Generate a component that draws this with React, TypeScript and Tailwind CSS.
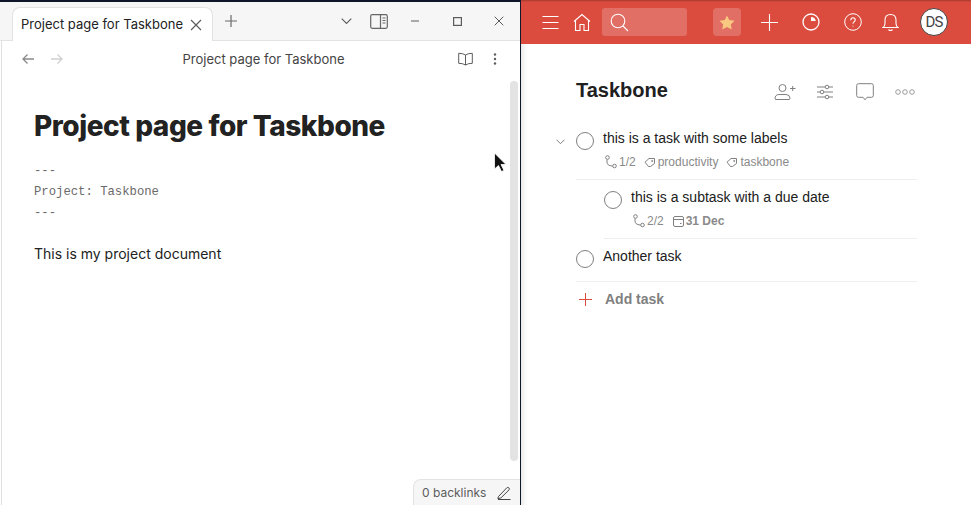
import React from "react";

const Ico = ({ w = 20, h = 20, vb, className = "", children, sw = 1 }: any) => (
  <svg width={w} height={h} viewBox={vb || `0 0 ${w} ${h}`} fill="none" stroke="currentColor" strokeWidth={sw} className={"shrink-0 " + className}>
    {children}
  </svg>
);

const SubIcon = () => (
  <Ico w={14} h={14} className="text-[#808080]">
    <circle cx="3.5" cy="2.5" r="1.8" />
    <circle cx="10.5" cy="11" r="1.8" />
    <path d="M3 4.5v2.5q0 3.8 5.5 4" />
  </Ico>
);

const TagIcon = () => (
  <Ico w={12} h={12} className="text-[#808080]">
    <path d="M1 6.2 L5 2.5 H10.5 V7.5 L6.5 10.5 H4.5 Z" />
    <circle cx="8.2" cy="5" r=".6" />
  </Ico>
);

const Circle = () => <span className="block w-[18px] h-[18px] rounded-full border border-[#808080] shrink-0" />;

function LeftPane() {
  return (
    <div className="relative w-[521px] shrink-0 h-full flex flex-col bg-white border-r border-[#0f172a] font-['Inter',sans-serif] overflow-hidden">
      <div className="h-[2px] bg-[#0f1629] shrink-0" />
      <div className="h-[39px] shrink-0 flex items-end bg-[#f6f6f6] border-b border-[#e3e3e3] text-[#5c5c5c]">
        <div className="ml-3 w-[201px] h-[34px] -mb-px bg-white border border-b-0 border-[#e3e3e3] rounded-t-lg flex items-center pl-[8px] text-[13px] text-[#222] leading-none">
          <span className="whitespace-nowrap">Project page for Taskbone</span>
          <Ico w={12} h={12} sw={1.2} className="ml-[7px] text-[#5c5c5c]"><path d="M1 1l10 10M11 1L1 11" /></Ico>
        </div>
        <div className="flex items-center h-[38px] ml-[11px] text-[#6a6a6a]">
          <Ico w={14} h={14} sw={1.2}><path d="M7 1v12M1 7h12" /></Ico>
        </div>
        <div className="flex-1" />
        <div className="flex items-center h-[38px] text-[#5c5c5c]">
          <Ico w={11} h={7} sw={1.1}><path d="M.7.7l4.800 4.800L10.300.7" /></Ico>
          <Ico w={18} h={15} sw={1.2} className="ml-[18px] text-[#666]">
            <rect x=".7" y=".7" width="16.600" height="13.600" rx="1.500" />
            <path d="M10.500 1v13M12.500 4h3M12.500 6.500h3M12.500 9h3" />
          </Ico>
          <Ico w={8} h={2} sw={1} className="ml-[23px]"><path d="M0 1h8" /></Ico>
          <Ico w={9} h={9} sw={1.200} className="ml-[34px]"><rect x=".600" y=".600" width="7.800" height="7.800" /></Ico>
          <Ico w={10} h={10} sw={1} className="ml-[32px] mr-[16px]"><path d="M.7.7l8.600 8.600M9.300.7L.7 9.300" /></Ico>
        </div>
      </div>
      <div className="flex-1 flex flex-col border-l border-[#e0e0e0] ml-px min-h-0">
        <div className="h-[36px] mb-[2px] shrink-0 flex items-center pl-[20px] pr-[20px]">
          <Ico w={12} h={12} sw={1.300} className="text-[#8a8a8a]"><path d="M12 6H1M5.500 1.500L1 6l4.500 4.500" /></Ico>
          <Ico w={12} h={12} sw={1.300} className="ml-[17px] text-[#d0d0d0]"><path d="M0 6h11M6.500 1.500L11 6l-4.500 4.500" /></Ico>
          <div className="flex-1 text-center text-[13px] leading-none text-[#444] pl-[6px] whitespace-nowrap">Project page for Taskbone</div>
          <Ico w={15} h={14} sw={1} className="text-[#5c5c5c] mr-[20px]"><path d="M7.500 3Q5 1.300.7 1.300v10Q5 11.300 7.500 13 10 11.300 14.300 11.300v-10Q10 1.300 7.500 3zM7.500 3v10" /></Ico>
          <svg width="4" height="12" viewBox="0 0 4 12" className="fill-[#5c5c5c] mr-[3px]"><circle cx="2" cy="1.500" r="1.200" /><circle cx="2" cy="6" r="1.200" /><circle cx="2" cy="10.500" r="1.200" /></svg>
        </div>
        <div className="pl-[32px] pr-10">
          <h1 className="mt-[29px] mb-[-1px] text-[28px] leading-[36px] font-extrabold tracking-[-0.45px] text-[#222] whitespace-nowrap">Project page for Taskbone</h1>
          <div className="mt-[18px] font-['Liberation_Mono',monospace] text-[12.250px] leading-[21px] text-[#6a6a6a]">
            <div>---</div>
            <div>Project: Taskbone</div>
            <div>---</div>
          </div>
          <p className="mt-[19px] text-[14px] leading-[21px] text-[#222]">This is my project document</p>
        </div>
      </div>
      <div className="absolute left-[510px] top-[81px] w-[8px] h-[380px] rounded-full bg-[#e3e3e3]" />
      <div className="absolute right-0 bottom-0 w-[107px] h-[26px] bg-[#f6f6f6] border-l border-t border-[#e3e3e3] rounded-tl-lg flex items-center pl-2 text-[12px] text-[#5c5c5c] leading-none">
        <span className="whitespace-nowrap">0 backlinks</span>
        <Ico w={14} h={14} sw={1} className="ml-[11px] text-[#444]"><path d="M1.500 10.500L9.800 1.800q1-.8 2 0t.3 2L3.800 12l-3 .5zM1 13.500h12.500" /></Ico>
      </div>
      <svg width="14" height="22" viewBox="0 0 14 22" className="absolute left-[493px] top-[152px]">
        <path d="M1.500 1v16l4-3.500 3 6 2.500-1-3-6h5z" fill="#111" stroke="#fff" strokeWidth=".8" />
      </svg>
    </div>
  );
}

function TopBar() {
  return (
    <div className="h-[44px] shrink-0 bg-[#db4c3f] flex items-center text-white pl-[21px] shadow-[inset_0_2px_2px_-1px_rgba(0,0,0,0.25)]">
      <Ico w={17} h={14} sw={1}><path d="M.500 1.500h16M.500 7.500h16M.500 13.500h16" /></Ico>
      <Ico w={18} h={19} sw={1.100} className="ml-[14px]"><path d="M1 8.500L9 1.500l8 7M2.500 7.500v10h4.500v-6h4v6h4.500v-10" /></Ico>
      <div className="ml-[11px] w-[85px] h-[28px] rounded-[3px] bg-white/20 flex items-center pl-[8px]">
        <Ico w={19} h={19} sw={1.100}><circle cx="8" cy="8" r="6.800" /><path d="M13 13l5 5" /></Ico>
      </div>
      <div className="ml-[26px] w-[28px] h-[28px] rounded-[4px] bg-white/20 flex items-center justify-center">
        <svg width="16" height="15" viewBox="0 0 16 15"><path d="M8 .5l2.300 4.600 5.200.7-3.700 3.600.9 5.100L8 12.100 3.300 14.500l.9-5.100L.5 5.800l5.200-.7z" fill="#f9c77f" /></svg>
      </div>
      <Ico w={17} h={17} sw={1.100} className="ml-[20px]"><path d="M8.500 0v17M0 8.500h17" /></Ico>
      <svg width="18" height="18" viewBox="0 0 18 18" className="ml-[24px] shrink-0">
        <circle cx="9" cy="9" r="8" fill="none" stroke="#fff" strokeWidth="1.300" />
        <path d="M9 4a5 5 0 0 1 4.800 4H9z" fill="#fff" />
      </svg>
      <svg width="18" height="18" viewBox="0 0 18 18" className="ml-[24px] shrink-0 fill-none stroke-white">
        <circle cx="9" cy="9" r="8.300" strokeWidth="1" />
        <path d="M6.800 7.200Q6.800 4.800 9 4.800t2.200 2.200q0 1.200-1.300 1.900Q9 9.500 9 10.800" strokeWidth="1.100" />
        <circle cx="9" cy="13" r=".6" fill="#fff" stroke="none" />
      </svg>
      <Ico w={17} h={19} sw={1.100} className="ml-[20px]"><path d="M1 14.500q2-1.500 2-4V7q0-5.500 5.500-5.500T14 7v3.500q0 2.500 2 4zM6.500 16.500q2 2 4 0" /></Ico>
      <div className="ml-[21px] w-[28px] h-[28px] rounded-full bg-white border border-[#444] flex items-center justify-center font-['Roboto',sans-serif] text-[15px] tracking-[-0.8px] leading-none text-[#444]">DS</div>
    </div>
  );
}

function Meta({ children }: any) {
  return <div className="flex items-center h-[14px] mt-[9px] pl-px text-[12px] leading-none text-[#8a8a8a]">{children}</div>;
}

function RightPane() {
  return (
    <div className="flex-1 min-w-0 h-full flex flex-col bg-white font-['Liberation_Sans',sans-serif] shadow-[inset_6px_0_6px_-5px_rgba(0,0,0,0.15)]">
      <TopBar />
      <div className="pl-[55px] w-[396px]">
        <div className="h-[32px] mt-[30px] flex items-center text-[#5f5f5f]">
          <h2 className="text-[20px] leading-none font-bold text-[#202020]">Taskbone</h2>
          <div className="flex-1" />
          <div className="flex items-center pt-[4px] mr-[2px]">
            <Ico w={22} h={18} sw={1} className="text-[#808080]"><circle cx="8.500" cy="5" r="3.500" /><path d="M1 16q0-4.500 4-4.500h7q4 0 4 4 0 1-1 1H2q-1 0-1-.5zM16 5.500h5.500M18.700 3v5" /></Ico>
            <Ico w={18} h={16} sw={1} className="ml-[20px] text-[#808080]"><path d="M1 3h16M1 8h16M1 13h16" /><circle cx="11" cy="3" r="1.800" fill="#fff" /><circle cx="6" cy="8" r="1.800" fill="#fff" /><circle cx="11" cy="13" r="1.800" fill="#fff" /></Ico>
            <Ico w={18} h={18} sw={1} className="ml-[22px] text-[#808080]"><path d="M2.500.7h13q1.800 0 1.800 1.800v10q0 1.800-1.800 1.800H11l-2 2.500-2-2.500H2.500Q.7 14.300.7 12.500v-10Q.7.7 2.500.7z" /></Ico>
            <Ico w={20} h={6} sw={1} className="ml-[21px] text-[#9a9a9a]"><circle cx="3" cy="3" r="2.300" /><circle cx="10" cy="3" r="2.300" /><circle cx="17" cy="3" r="2.300" /></Ico>
          </div>
        </div>
        <div className="relative mt-[23px]">
          <Ico w={9} h={6} sw={1} className="absolute left-[-20px] top-[10px] text-[#808080]"><path d="M.5.700l4 4 4-4" /></Ico>
          <div className="flex h-[43px] border-b border-[#eeeeee] box-content pb-[7px]">
            <div className="pt-[3px]"><Circle /></div>
            <div className="ml-[9px]">
              <div className="text-[14px] leading-[16px] pt-[1px] text-[#202020]">this is a task with some labels</div>
              <Meta>
                <SubIcon /><span className="ml-px">1/2</span>
                <span className="ml-[8px]"><TagIcon /></span><span className="ml-[2px]">productivity</span>
                <span className="ml-[8px]"><TagIcon /></span><span className="ml-[2px]">taskbone</span>
              </Meta>
            </div>
          </div>
          <div className="flex h-[43px] ml-[28px] border-b border-[#eeeeee] box-content pt-[9px] pb-[6px]">
            <div className="pt-[2px]"><Circle /></div>
            <div className="ml-[9px]">
              <div className="text-[14px] leading-[16px] text-[#202020]">this is a subtask with a due date</div>
              <Meta>
                <SubIcon /><span className="ml-px">2/2</span>
                <span className="ml-[9px]"><Ico w={11} h={11} className="text-[#808080]"><rect x=".500" y=".500" width="10" height="10" rx="1.500" /><path d="M.500 3.500h10M7 7.500h1.500" /></Ico></span>
                <span className="ml-[2px] font-bold">31 Dec</span>
              </Meta>
            </div>
          </div>
          <div className="flex h-[30px] border-b border-[#eeeeee] box-content pt-[9px] pb-[3px]">
            <div className="pt-[2px]"><Circle /></div>
            <div className="ml-[9px] text-[14px] leading-[16px] text-[#202020]">Another task</div>
          </div>
          <div className="flex items-center h-[34px]">
            <svg width="13" height="13" viewBox="0 0 13 13" className="ml-[3px] shrink-0"><path d="M6.500 0v13M0 6.500h13" fill="none" stroke="#db4c3f" strokeWidth="1" /></svg>
            <span className="ml-[13px] text-[14px] leading-none font-bold text-[#808080]">Add task</span>
          </div>
        </div>
      </div>
    </div>
  );
}

export default function App() {
  return (
    <div className="flex w-[971px] h-[505px] overflow-hidden bg-white">
      <LeftPane />
      <RightPane />
    </div>
  );
}
